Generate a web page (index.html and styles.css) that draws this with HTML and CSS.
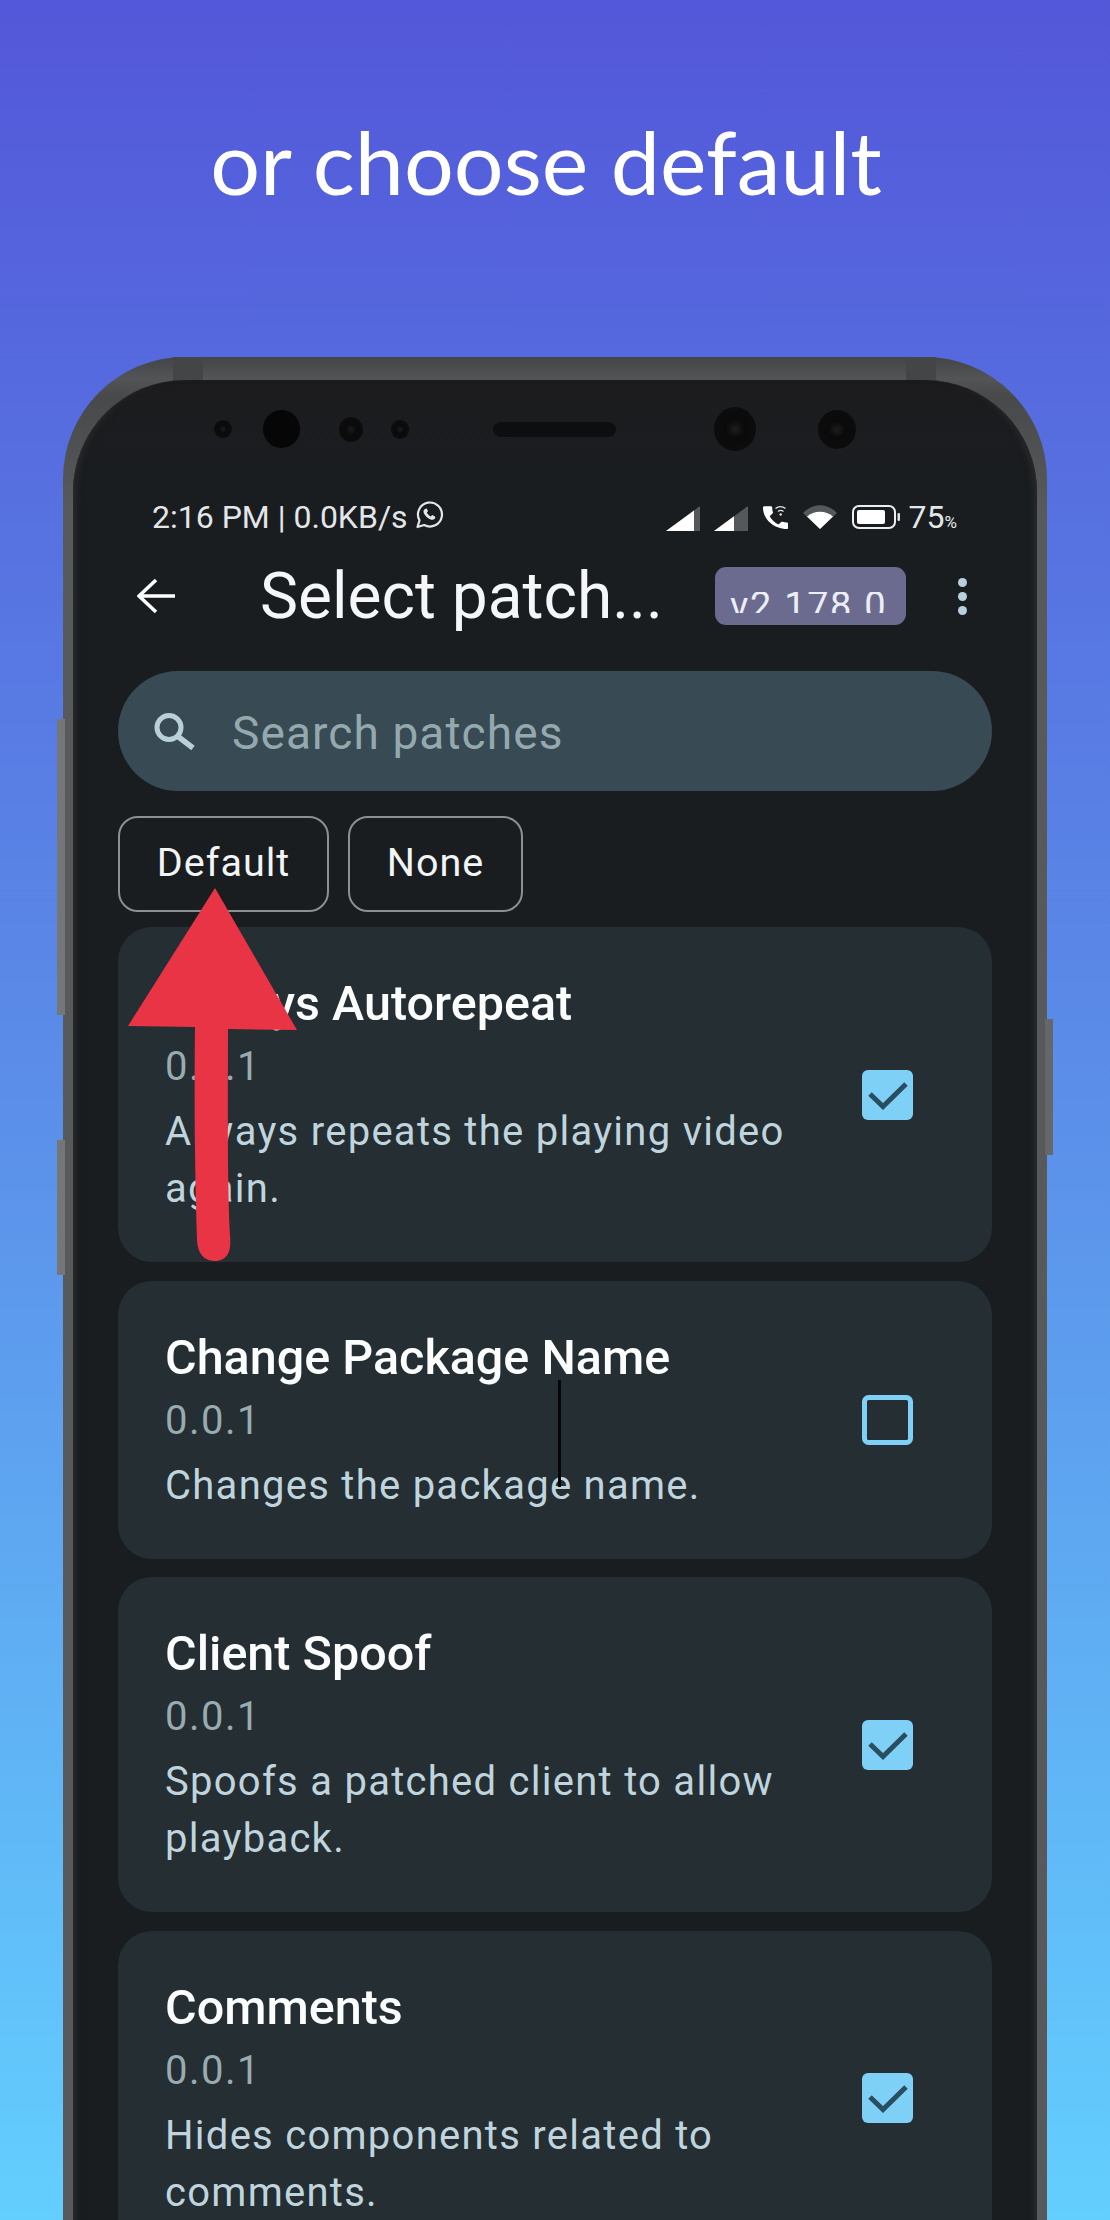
FILE: index.html
```html
<!DOCTYPE html>
<html lang="en">
<head>
<meta charset="utf-8">
<title>or choose default</title>
<link rel="stylesheet" href="styles.css">
</head>
<body>
<main class="page">
  <h1 class="headline">or choose default</h1>
  <div class="phone">
    <span class="seam seam-left"></span>
    <span class="seam seam-right"></span>
    <span class="side-btn btn-a"></span>
    <span class="side-btn btn-b"></span>
    <span class="side-btn btn-c"></span>
    <div class="screen">
      <div class="sensors">
        <span class="lens s1"></span>
        <span class="lens s2"></span>
        <span class="lens s3"></span>
        <span class="lens s4"></span>
        <span class="speaker"></span>
        <span class="lens s5"></span>
        <span class="lens s6"></span>
      </div>
      <div class="status">
        <div class="status-left">
          <span>2:16 PM | 0.0KB/s</span>
          <svg class="wa" viewBox="0 0 29 28"><path d="M2.500 26l2-6.600a12 12 0 1 1 4.600 4.600z" fill="none" stroke="#e4e6e8" stroke-width="2.200" stroke-linejoin="round"/><path d="M10 8c-1.500 1-2 2.500-1 4.500 1.500 3 4 5 6.500 6 2 .8 3.800 0 4.800-1.500l-.3-1.500-2.800-1.400-1.400 1.400c-1.800-.8-3.200-2.200-4-4l1.200-1.300-1.200-2.800z" fill="#e4e6e8"/></svg>
        </div>
        <div class="status-right">
          <svg class="sig" viewBox="0 0 34 25"><polygon points="0,25 34,0 34,25" fill="#55585b"/><polygon points="0,25 28,4.400 28,25" fill="#fff"/></svg>
          <svg class="sig sig2" viewBox="0 0 34 25"><polygon points="0,25 34,0 34,25" fill="#55585b"/><polygon points="0,25 20,10.300 20,25" fill="#fff"/></svg>
          <svg class="call" viewBox="0 0 27 25"><path d="M25 18.500c-1.700 0-3.200-.2-4.600-.7-.5-.1-1 0-1.400.4l-2.600 2.400C12.800 18.800 9.600 15.800 7.700 12.300l2.800-2.700c.4-.4.500-.8.400-1.300-.5-1.500-.7-3.100-.7-4.800 0-.7-.6-1.300-1.300-1.300H2.300C1.600 2.200 1 2.800 1 3.500 1 15.400 12 25 25 25c.7 0 1-.6 1-1.300v-3.900c0-.7-.3-1.300-1-1.300z" fill="#fff"/><path d="M13.500 4.500a8 8 0 0 1 10 0M16 7.500a4.500 4.500 0 0 1 5.500 0" fill="none" stroke="#dfe3e6" stroke-width="1.300"/><circle cx="18.700" cy="10.500" r="1.200" fill="#dfe3e6"/></svg>
          <svg class="wifi" viewBox="0 0 34 24"><path d="M0 8C10-2.500 24-2.500 34 8L17 24z" fill="#55585b"/><path d="M4 11.500C11 5 23 5 30 11.500L17 24z" fill="#fff"/></svg>
          <svg class="batt" viewBox="0 0 48 24"><rect x="1" y="1" width="42" height="22" rx="6" fill="none" stroke="#eceef0" stroke-width="2"/><rect x="5" y="5" width="28" height="14" rx="2" fill="#fff"/><rect x="45.500" y="8" width="2.500" height="8" rx="1" fill="#dfe3e6"/></svg>
          <span class="pct">75<small>%</small></span>
        </div>
      </div>
      <header class="appbar">
        <svg class="back" viewBox="0 0 38 36"><path d="M19 2L2 18l17 16M2 18h36" fill="none" stroke="#fff" stroke-width="3.600"/></svg>
        <div class="title">Select patch...</div>
        <div class="badge"><span class="badge-clip">v2.178.0</span></div>
        <div class="dots"><i></i><i></i><i></i></div>
      </header>
      <div class="search">
        <svg class="search-icon" viewBox="0 0 42 37"><circle cx="16" cy="14.500" r="12" fill="none" stroke="#b9d0d8" stroke-width="5"/><path d="M25 23.500L40 35" fill="none" stroke="#b9d0d8" stroke-width="5.500"/></svg>
        <span class="search-text">Search patches</span>
      </div>
      <div class="actions">
        <button class="chip chip-default">Default</button>
        <button class="chip chip-none">None</button>
      </div>
      <section class="cards">
        <article class="card">
          <div class="card-text">
            <div class="card-title">Always Autorepeat</div>
            <div class="card-version">0.0.1</div>
            <div class="card-desc">Always repeats the playing video again.</div>
          </div>
          <svg class="check" viewBox="0 0 51 50"><rect width="51" height="50" rx="6" fill="#7fd0f7"/><path d="M8 24l13 12.500L44 14" fill="none" stroke="#2a4d60" stroke-width="5"/></svg>
        </article>
        <article class="card">
          <div class="card-text">
            <div class="card-title">Change Package Name</div>
            <div class="card-version">0.0.1</div>
            <div class="card-desc">Changes the package name.</div>
          </div>
          <svg class="check" viewBox="0 0 51 50"><rect x="2.500" y="2.500" width="46" height="45" rx="4" fill="none" stroke="#7fd0f7" stroke-width="5"/></svg>
        </article>
        <article class="card">
          <div class="card-text">
            <div class="card-title">Client Spoof</div>
            <div class="card-version">0.0.1</div>
            <div class="card-desc">Spoofs a patched client to allow playback.</div>
          </div>
          <svg class="check" viewBox="0 0 51 50"><rect width="51" height="50" rx="6" fill="#7fd0f7"/><path d="M8 24l13 12.500L44 14" fill="none" stroke="#2a4d60" stroke-width="5"/></svg>
        </article>
        <article class="card">
          <div class="card-text">
            <div class="card-title">Comments</div>
            <div class="card-version">0.0.1</div>
            <div class="card-desc">Hides components related to comments.</div>
          </div>
          <svg class="check" viewBox="0 0 51 50"><rect width="51" height="50" rx="6" fill="#7fd0f7"/><path d="M8 24l13 12.500L44 14" fill="none" stroke="#2a4d60" stroke-width="5"/></svg>
        </article>
      </section>
    </div>
  </div>
  <span class="stray-line"></span>
  <svg class="arrow" viewBox="0 0 185 390"><path d="M95 8L8 146l67 1C74 220 75 300 77 360c1 18 11 21 18 21 9 0 17-5 15-25-3-56-2-136-2-207l69 1z" fill="#e93445"/></svg>
</main>
</body>
</html>
```
FILE: styles.css
```css
* { box-sizing: border-box; }
html, body { margin: 0; height: 2220px; overflow: hidden; }
.page {
  position: relative;
  width: 1110px;
  height: 2220px;
  overflow: hidden;
  background: linear-gradient(180deg, #5357d9 0%, #5b8fe9 50%, #63cffe 100%);
  font-family: Roboto, "Liberation Sans", sans-serif;
}
.headline {
  margin: 0;
  height: 357px;
  padding: 111px 18px 0 0;
  text-align: center;
  font: 400 88px/100px Lato, "Liberation Sans", sans-serif;
  color: #fff;
}
.phone {
  position: relative;
  margin-left: 63px;
  width: 984px;
  height: 1900px;
  padding: 23px 10px 0;
  border-radius: 122px 122px 0 0;
  background: linear-gradient(180deg, #444547 0, #535456 22px, #48494b 40px, #58595a 150px);
}
.seam { position: absolute; top: 0; width: 30px; height: 23px; background: #444547; }
.seam-left { left: 110px; }
.seam-right { left: 843px; }
.side-btn { position: absolute; background: #757678; }
.btn-a { left: -6px; top: 362px; width: 8px; height: 296px; }
.btn-b { left: -6px; top: 783px; width: 8px; height: 135px; }
.btn-c { left: 982px; top: 662px; width: 8px; height: 136px; background: #66676a; }
.screen {
  height: 100%;
  border-radius: 112px 112px 0 0;
  background: linear-gradient(180deg, #1c1c1e 0, #191d20 130px);
  box-shadow: inset 7px 0 6px -4px #2a2a2b, inset -7px 0 6px -4px #2a2a2b;
  overflow: hidden;
}
.sensors { display: flex; align-items: center; height: 98px; padding-left: 141px; }
.lens {
  flex: none;
  border-radius: 50%;
  background: radial-gradient(circle at 50% 50%, #1d1d1f 0, #0a0a0b 30%, #0c0c0d 70%, #101012 100%);
}
.s1 { width: 18px; height: 18px; }
.s2 { width: 37px; height: 38px; margin-left: 31px; background: #060607; }
.s3 { width: 24px; height: 25px; margin-left: 39px; }
.s4 { width: 18px; height: 19px; margin-left: 28px; }
.speaker { width: 123px; height: 15px; margin-left: 84px; border-radius: 8px; background: #0d0e0f; }
.s5 { width: 42px; height: 44px; margin-left: 98px; }
.s6 { width: 38px; height: 39px; margin-left: 62px; }
.status {
  display: flex;
  justify-content: space-between;
  align-items: center;
  height: 40px;
  margin-top: 19px;
  padding: 0 80px 0 79px;
  color: #e4e6e8;
  font-size: 32px;
}
.status-left, .status-right { display: flex; align-items: center; }
.wa { width: 29px; height: 28px; margin-left: 7px; margin-top: -4px; }
.sig { width: 34px; height: 25px; margin-top: 2px; }
.sig2 { margin-left: 14px; }
.call { width: 27px; height: 25px; margin-left: 14px; margin-top: -2px; }
.wifi { width: 34px; height: 24px; margin-left: 14px; }
.batt { width: 48px; height: 24px; margin-left: 15px; }
.pct { margin-left: 9px; font-size: 32px; }
.pct small { font-size: 17px; }
.appbar { display: flex; align-items: center; height: 80px; margin-top: 19px; padding-left: 64px; }
.back { width: 38px; height: 36px; flex: none; }
.title { width: 455px; margin: 2px 0 0 85px; font-size: 64px; line-height: 80px; color: #f4f6f7; white-space: nowrap; }
.badge {
  width: 191px;
  height: 58px;
  padding: 25px 0 0 15px;
  border-radius: 11px;
  background: #6b6b90;
}
.badge-clip {
  display: block;
  height: 21px;
  overflow: hidden;
  font-size: 38px;
  line-height: 28px;
  letter-spacing: 1.500px;
  color: #eceef4;
  white-space: nowrap;
}
.dots { display: flex; flex-direction: column; gap: 5px; margin-left: 52px; }
.dots i { display: block; width: 9px; height: 9px; border-radius: 50%; background: #b8d0de; }
.search {
  display: flex;
  align-items: center;
  height: 120px;
  margin: 35px 45px 0;
  padding-left: 35px;
  border-radius: 60px;
  background: #384a54;
}
.search-icon { width: 42px; height: 37px; flex: none; }
.search-text { margin: 4px 0 0 37px; font-size: 46px; letter-spacing: 1.100px; color: #93a9ae; }
.actions { display: flex; gap: 19px; margin: 25px 45px 0; }
.chip {
  height: 96px;
  border: 2px solid #8b9092;
  border-radius: 20px;
  background: transparent;
  color: #f2f4f5;
  font: 400 39.500px/1 Roboto, "Liberation Sans", sans-serif;
  letter-spacing: 1px;
  padding: 0 0 2px;
}
.chip-default { width: 211px; }
.chip-none { width: 175px; }
.cards { display: flex; flex-direction: column; gap: 18.500px; margin: 15px 45px 0; }
.card {
  display: flex;
  align-items: center;
  justify-content: space-between;
  padding: 48px 79px 45px 47px;
  border-radius: 34px;
  background: #242e33;
}
.card-text { width: 660px; }
.card-title { font-size: 48.500px; font-weight: 500; line-height: 57px; color: #fbfcfc; }
.card-version { padding-top: 2px; font-size: 40px; line-height: 66px; letter-spacing: 1.500px; color: #98abb1; }
.card-desc { margin-top: 3px; font-size: 40px; line-height: 57px; letter-spacing: 1.270px; color: #bfd4dd; }
.check { width: 51px; height: 50px; flex: none; margin-top: -3px; }
.stray-line { position: absolute; left: 558px; top: 1380px; width: 3px; height: 107px; background: #050607; }
.arrow { position: absolute; left: 120px; top: 880px; width: 185px; height: 390px; }
```
